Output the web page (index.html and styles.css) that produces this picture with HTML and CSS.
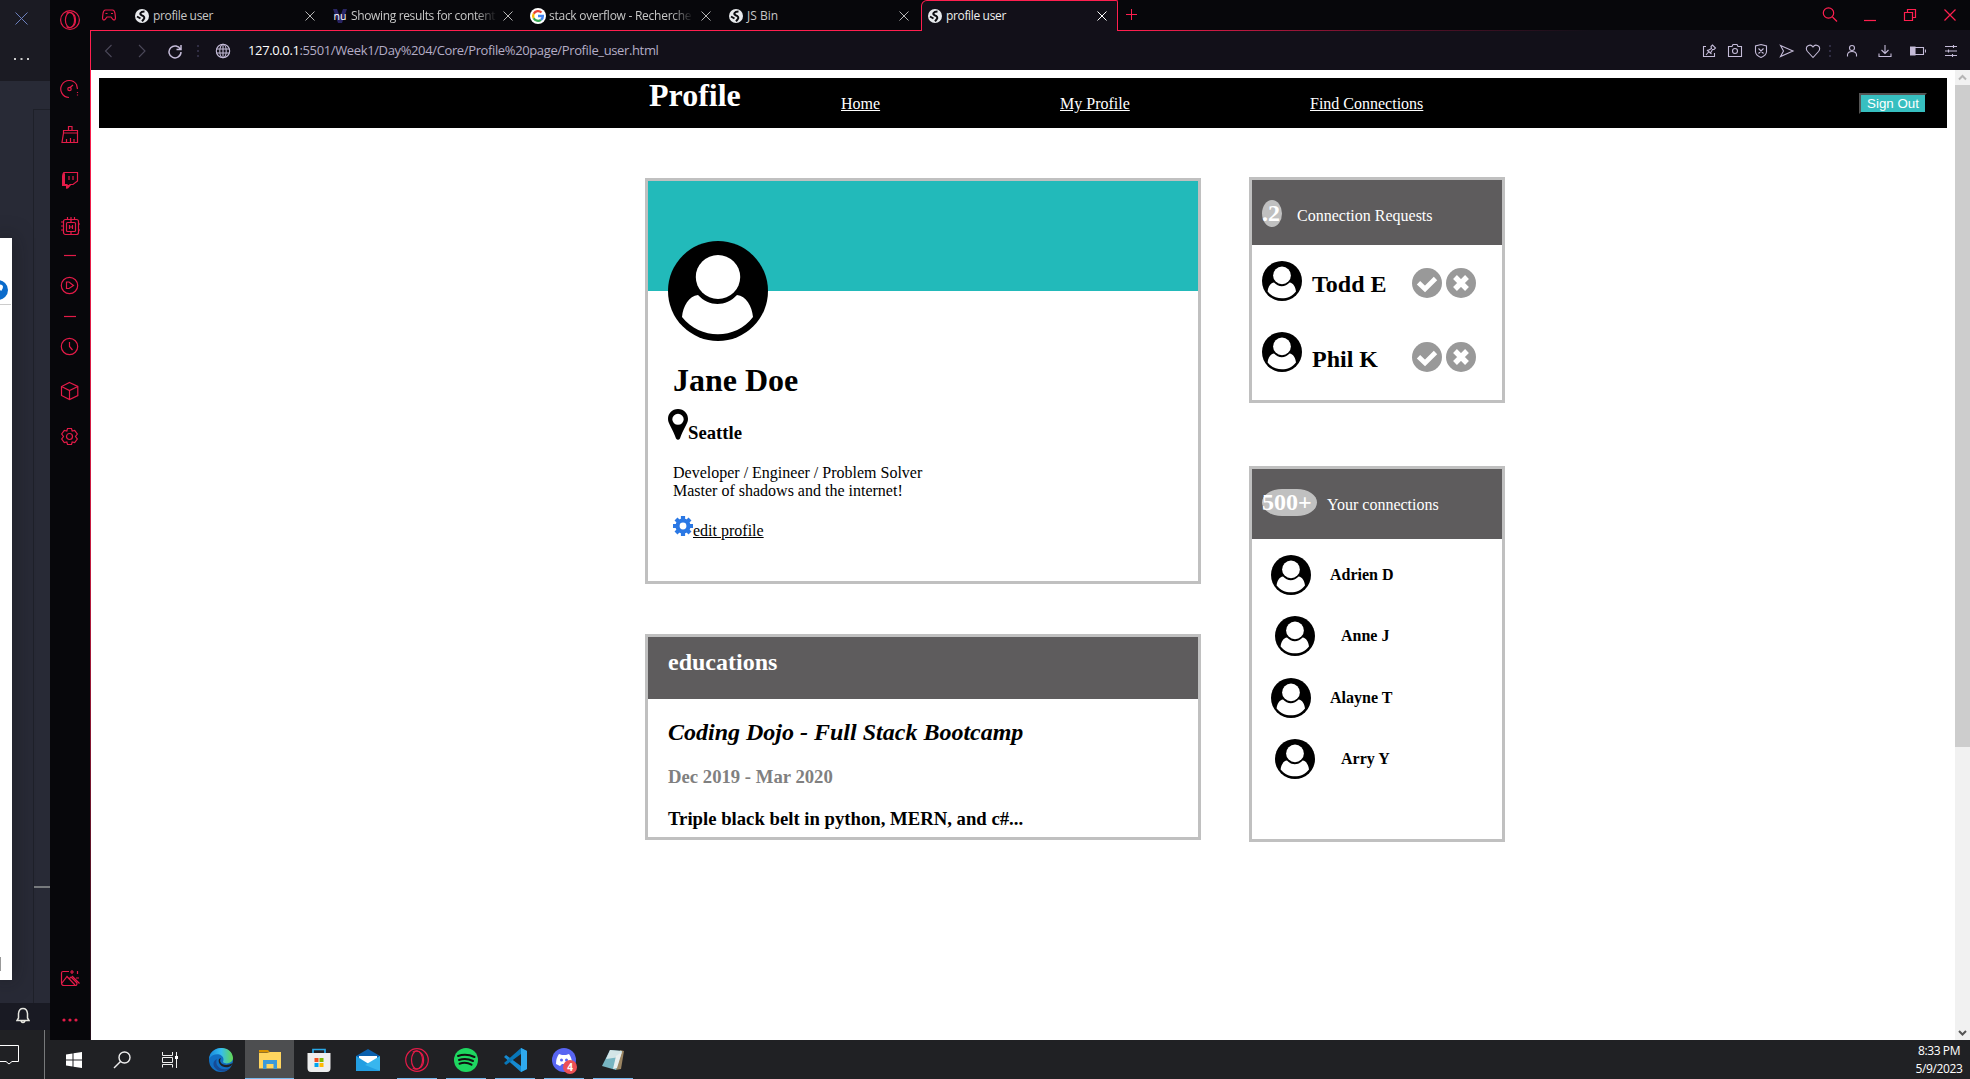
FILE: index.html
```html
<!DOCTYPE html>
<html lang="en">
<head>
<meta charset="utf-8">
<title>profile user</title>
<link rel="stylesheet" href="styles.css">
</head>
<body>
<svg class="defs" aria-hidden="true">
  <symbol id="user" viewBox="0 0 100 100"><circle cx="50" cy="50" r="50"/><ellipse cx="50" cy="36" rx="22.2" ry="22" fill="#fff"/><path d="M30 54C21 55 15 65 14 76C32 99 68 99 85 76C84 65 78 55 69 54C58 66 41 66 30 54Z" fill="#fff"/></symbol>
  <symbol id="check" viewBox="0 0 30 30"><circle cx="15" cy="15" r="15" fill="#999"/><path d="M6.500 14.800L13 21L23.500 10.500" fill="none" stroke="#fff" stroke-width="4.800"/></symbol>
  <symbol id="cross" viewBox="0 0 30 30"><circle cx="15" cy="15" r="15" fill="#999"/><path d="M9 9L21 21M21 9L9 21" fill="none" stroke="#fff" stroke-width="5.400"/></symbol>
  <symbol id="world" viewBox="0 0 14 14"><circle cx="7" cy="7" r="7" fill="#e8eaed"/><path d="M9.500 2.500C5 2.500 4.500 5 6.500 6.200C9.500 7 10 9 8.500 10.500L7 12.300M2 7.500L5.500 9.500" fill="none" stroke="#0b0b10" stroke-width="2"/></symbol>
  <symbol id="x" viewBox="0 0 10 10"><path d="M.5 .5L9.500 9.500M9.500 .5L.5 9.500"/></symbol>
  <symbol id="opera" viewBox="0 0 20 20"><circle cx="10" cy="10" r="9.400"/><ellipse cx="10" cy="10" rx="4.600" ry="7.500"/><path d="M6.500 3.500C9 1.200 15.500 2.500 15.500 10S9 18.800 6.500 16.500"/></symbol>
</svg>
<div class="desktop">
  <div class="behind">
    <div class="behind-title">
      <svg class="b-x" viewBox="0 0 13 13"><path d="M.5 .5L12.500 12.500M12.500 .5L.5 12.500"/></svg>
      <svg class="b-dots" viewBox="0 0 17 4"><path d="M1 2h2M7.500 2h2M14 2h2"/></svg>
    </div>
    <div class="behind-body">
      <div class="dialog">
        <svg viewBox="0 0 12 742"><circle cx="-2" cy="52" r="10" fill="#0b6bcb"/><path d="M0 48Q3 48 0 52" stroke="#fff" stroke-width="3"/><path d="M0 66.500H11" stroke="#ccc"/><path d="M.5 719v14" stroke="#999"/></svg>
      </div>
      <div class="pane"><div class="pane-line"></div></div>
    </div>
    <div class="behind-status">
      <svg viewBox="0 0 14 17"><path d="M1 13.500H13L11.500 11V6.500Q11 1.500 7 1.500T2.500 6.500V11ZM5 14Q7 17 9 14"/></svg>
    </div>
    <div class="bar-left">
      <svg viewBox="0 0 20 20"><path d="M0 .5H18.500V16.500H12L9 19L6 16.500H0"/></svg>
      <i></i>
    </div>
  </div>

  <div class="main">
    <div class="browser">
      <nav class="sidebar">
        <svg viewBox="0 0 20 20"><use href="#opera"/></svg>
        <svg class="m49" viewBox="0 0 20 20"><path d="M9 18.500A8.500 8.500 0 1 1 16.500 5.500L17.500 10M17.500 13v1M17.500 15.500v1M9.500 9L13 6"/><circle cx="9.500" cy="10" r="1.700"/></svg>
        <svg class="m26" viewBox="0 0 20 20"><path d="M3.500 8V5.500H17.500V8ZM3.500 8L2 17.500H17.500V8M8.500 5V1.500H12V5M6.500 17V14M10.500 17V13M14 17V14"/></svg>
        <svg class="m25" viewBox="0 0 20 20"><path d="M4 2.500H17.500V11L13 14.500H10L7 17.500V14.500H3V4Z"/><path class="fill" d="M4 2L2 6V16H6V18.500H8L11 15H5V4Z"/><path d="M9 6v4M13 6v4"/></svg>
        <svg class="m26" viewBox="0 0 20 20"><rect x="3.500" y="3.500" width="15" height="15" rx="2"/><rect x="6.500" y="6.500" width="9" height="9" rx="1"/><path d="M9.500 9v4M12.500 9v4M9.500 11h3M7.500 3V1M11 6V1M14.500 3V1M11 16v3M1 6h2M1 10h2M1 14h2M18 8h2M18 14h2"/></svg>
        <svg class="m9" viewBox="0 0 20 20"><path d="M4 10.500H16"/></svg>
        <svg class="m10" viewBox="0 0 20 20"><circle cx="9.500" cy="10.500" r="8.200"/><path d="M6.500 7H9L13.500 10.500L9 13.500H6.500Z"/></svg>
        <svg class="m11" viewBox="0 0 20 20"><path d="M4 10.500H16"/></svg>
        <svg class="m10" viewBox="0 0 20 20"><circle cx="9.500" cy="10.500" r="8.200"/><path d="M9.500 6V10.500L12.500 14"/></svg>
        <svg class="m25" viewBox="0 0 20 20"><path d="M9.500 1.500L17.800 5.500V14.500L9.500 18.500L1.500 14.500V5.500ZM1.500 5.500L9.500 9.500L17.800 5.500M9.500 9.500V18.500"/></svg>
        <svg class="m25" viewBox="0 0 20 20"><circle cx="9.500" cy="10.500" r="3"/><path d="M7.500 2.500H11.500L12.200 5L14.700 4.500L17.300 8L15.500 10.500L17.300 13L14.700 16.500L12.200 16L11.500 18.500H7.500L6.800 16L4.300 16.500L1.700 13L3.500 10.500L1.700 8L4.300 4.500L6.800 5Z"/></svg>
        <svg class="push" viewBox="0 0 20 20"><path d="M9 3.500H3Q1.500 3.500 1.500 5V15Q1.500 17.500 4 17.500H15.500Q17 17.500 17 15M2 15L7 8.500L15 17M9 11L11 9L17 15M12 8L19.500 15.500M12 2v4M10 4h4M17.500 3v3M16 10h3"/></svg>
        <svg class="m22 dots" viewBox="0 0 20 20"><circle cx="4" cy="10" r="1.600"/><circle cx="10" cy="10" r="1.600"/><circle cx="16" cy="10" r="1.600"/></svg>
      </nav>
      <div class="window">
        <div class="tabs">
          <svg class="gx" viewBox="0 0 14 12"><path d="M3.500 1H10.500Q12.500 1 13 4.500L13.500 9Q13 12 11 10.500L9 8H5L3 10.500Q1 12 .5 9L1 4.500Q1.500 1 3.500 1ZM3.500 4.500h2M9 4.500h2"/></svg>
          <div class="tab"><svg class="fav" viewBox="0 0 14 14"><use href="#world"/></svg><span class="t1">profile user</span><svg class="close" viewBox="0 0 10 10"><use href="#x"/></svg></div>
          <div class="tab"><span class="nu"><svg viewBox="0 0 14 14"><path d="M0 0h4l3 8l3-8h4L9 14H5Z" fill="#292564"/></svg><b>nu</b></span><span class="t2 fade">Showing results for content</span><svg class="close" viewBox="0 0 10 10"><use href="#x"/></svg></div>
          <div class="tab goog"><svg class="fav" viewBox="0 0 16 16"><circle cx="8" cy="8" r="8" fill="#fff"/><g fill="none" stroke-width="2.300"><path d="M11.500 4.500A4.900 4.900 0 0 0 3.700 5.700" stroke="#ea4335"/><path d="M3.700 5.700A4.900 4.900 0 0 0 3.700 10.300" stroke="#fbbc05"/><path d="M3.700 10.300A4.900 4.900 0 0 0 11 11.800" stroke="#34a853"/><path d="M11 11.800Q13 10.500 12.900 8H8" stroke="#4285f4"/></g></svg><span class="t3 fade">stack overflow - Recherche</span><svg class="close" viewBox="0 0 10 10"><use href="#x"/></svg></div>
          <div class="tab"><svg class="fav" viewBox="0 0 14 14"><use href="#world"/></svg><span class="t4">JS Bin</span><svg class="close" viewBox="0 0 10 10"><use href="#x"/></svg></div>
          <div class="tab active"><svg class="fav" viewBox="0 0 14 14"><use href="#world"/></svg><span class="t1">profile user</span><svg class="close" viewBox="0 0 10 10"><use href="#x"/></svg></div>
          <svg class="plus" viewBox="0 0 11 11"><path d="M5.500 0V11M0 5.500H11"/></svg>
          <div class="wincontrols">
            <svg viewBox="0 0 16 16"><circle cx="6.500" cy="6" r="5.200"/><path d="M10.500 10L15 14.500"/></svg>
            <svg viewBox="0 0 16 16"><path d="M2 13.500H14"/></svg>
            <svg viewBox="0 0 16 16"><path d="M2.500 5.500H10.500V13.500H2.500ZM5.500 5V2.500H13.500V10.500H11"/></svg>
            <svg viewBox="0 0 16 16"><path d="M2.500 2.500L13.500 13.500M13.500 2.500L2.500 13.500"/></svg>
          </div>
        </div>
        <div class="toolbar">
          <svg class="dim" viewBox="0 0 16 16"><path d="M10.500 2L4.500 8L10.500 14"/></svg>
          <svg class="dim fwd" viewBox="0 0 16 16"><path d="M5 2L11 8L5 14"/></svg>
          <svg class="reload" viewBox="0 0 16 16"><path d="M13.500 6.500A6 6 0 1 0 14 9M14 2V6.500H9.500"/></svg>
          <svg class="sep" viewBox="0 0 2 12"><path d="M0 1H2M0 6H2M0 11H2"/></svg>
          <svg class="globe" viewBox="0 0 16 16"><circle cx="8" cy="8" r="6.700"/><ellipse cx="8" cy="8" rx="3.200" ry="6.700"/><path d="M1.500 6H14.500M1.500 10H14.500M8 1.500V14.500"/></svg>
          <div class="url"><b>127.0.0.1</b>:5501/Week1/Day%204/Core/Profile%20page/Profile_user.html</div>
          <div class="tools">
            <svg viewBox="0 0 16 16"><path d="M5 3.500H2.500V13.500H13.500V10M5 12L8 8.500M6 7L10.500 11M7 7.500L10.500 5.500L10 3.500L11.500 2L14.500 5L13 6.500L11.500 6.500L9.500 10"/></svg>
            <svg viewBox="0 0 16 16"><path d="M1.500 3.500H5L6 1.500H10L11 3.500H14.500V13.500H1.500Z"/><circle cx="8" cy="8" r="2.500"/></svg>
            <svg viewBox="0 0 16 16"><path d="M8 1.500L13.500 3V9Q13 12.500 8 14.500Q3 12.500 2.500 9V3ZM5.500 5.500L10.500 10.500M10.500 5.500L5.500 10.500"/></svg>
            <svg viewBox="0 0 16 16"><path d="M1.500 2.500L14 8L1.500 13.500L4.500 8Z"/></svg>
            <svg viewBox="0 0 16 16"><path d="M8 14.500L2.500 8.500Q.5 6 2 3.500Q5.500 .500 8 4Q10.500 .5 14 3.500Q15.500 6 13.500 8.500Z"/></svg>
            <svg class="sep" viewBox="0 0 2 12"><path d="M0 1H2M0 6H2M0 11H2"/></svg>
            <svg viewBox="0 0 16 16"><circle cx="8" cy="5" r="2.500"/><path d="M3.500 13.500V11.500Q4 8.500 8 8.500T12.500 11.500V13.500"/></svg>
            <svg viewBox="0 0 16 16"><path d="M8 2V10.500M4.500 7L8 10.500L11.500 7M2 10.500V13.500H14V10.500"/></svg>
            <svg viewBox="0 0 16 16"><path d="M.5 4.500H13.500V11.500H.5ZM15.500 6.500V9.500"/><path class="fill" d="M0 4H5V12H0Z"/></svg>
            <svg viewBox="0 0 16 16"><path d="M2 3.500H14M2 8H14M2 12.500H14M10.500 2v3M5.500 6.500v3M9.500 11v3"/></svg>
          </div>
        </div>
        <div class="viewport">
          <div class="page">
            <header>
              <h1>Profile</h1>
              <a class="l1">Home</a><a class="l2">My Profile</a><a class="l3">Find Connections</a>
              <button>Sign Out</button>
            </header>
            <div class="columns">
              <main>
                <section class="card profile">
                  <div class="banner"></div>
                  <svg class="avatar" viewBox="0 0 100 100"><use href="#user"/></svg>
                  <h1>Jane Doe</h1>
                  <div class="place"><svg viewBox="0 0 20 31"><path d="M10 0C4 0 0 4.500 0 10C0 15 5 20 8 29.500Q10 32 12 29.500C15 20 20 15 20 10C20 4.500 16 0 10 0ZM10 4.800A5.700 5.500 0 1 1 10 15.800A5.700 5.500 0 1 1 10 4.800Z" fill-rule="evenodd"/></svg><h3>Seattle</h3></div>
                  <p>Developer / Engineer / Problem Solver<br>Master of shadows and the internet!</p>
                  <div class="edit"><svg viewBox="0 0 20 20"><circle cx="10" cy="10" r="5.500"/><path d="M10 0V5M10 15V20M0 10H5M15 10H20M3 3L6.500 6.500M13.500 13.500L17 17M17 3L13.500 6.500M6.500 13.500L3 17"/></svg><a>edit profile</a></div>
                </section>
                <section class="card education">
                  <div class="cardhead"><h2>educations</h2></div>
                  <h2 class="school">Coding Dojo - Full Stack Bootcamp</h2>
                  <h3 class="dates">Dec 2019 - Mar 2020</h3>
                  <h3>Triple black belt in python, MERN, and c#...</h3>
                </section>
              </main>
              <aside>
                <section class="card requests">
                  <div class="cardhead"><span class="count">.2</span><span class="label">Connection Requests</span></div>
                  <div class="request"><svg class="face" viewBox="0 0 100 100"><use href="#user"/></svg><h2>Todd E</h2><svg class="act" viewBox="0 0 30 30"><use href="#check"/></svg><svg class="act" viewBox="0 0 30 30"><use href="#cross"/></svg></div>
                  <div class="request second"><svg class="face" viewBox="0 0 100 100"><use href="#user"/></svg><h2>Phil K</h2><svg class="act" viewBox="0 0 30 30"><use href="#check"/></svg><svg class="act" viewBox="0 0 30 30"><use href="#cross"/></svg></div>
                </section>
                <section class="card connections">
                  <div class="cardhead"><span class="count">500+</span><span class="label">Your connections</span></div>
                  <div class="person"><svg class="face" viewBox="0 0 100 100"><use href="#user"/></svg><b>Adrien D</b></div>
                  <div class="person even"><svg class="face" viewBox="0 0 100 100"><use href="#user"/></svg><b>Anne J</b></div>
                  <div class="person third"><svg class="face" viewBox="0 0 100 100"><use href="#user"/></svg><b>Alayne T</b></div>
                  <div class="person even"><svg class="face" viewBox="0 0 100 100"><use href="#user"/></svg><b>Arry Y</b></div>
                </section>
              </aside>
            </div>
          </div>
          <div class="scrollbar">
            <svg viewBox="0 0 15 15"><path d="M4 9.500L7.500 6L11 9.500" stroke="#b5b5b5"/></svg>
            <div class="thumb"></div>
            <svg class="down" viewBox="0 0 15 15"><path d="M4 6L7.500 9.500L11 6" stroke="#555"/></svg>
          </div>
        </div>
      </div>
    </div>
    <div class="taskbar">
      <div class="sys"><svg viewBox="0 0 24 24"><path fill="#fff" d="M4 6.500L10.500 5.500V11.500H4ZM11.500 5.300L20 4V11.500H11.500ZM4 12.500H10.500V18.500L4 17.500ZM11.500 12.500H20V20L11.500 18.700Z"/></svg></div>
      <div class="sys"><svg viewBox="0 0 24 24"><g fill="none" stroke="#eee" stroke-width="1.400"><circle cx="14.500" cy="9.500" r="5.500"/><path d="M10.500 13.500L4 20"/></g></svg></div>
      <div class="sys"><svg viewBox="0 0 24 24"><path d="M4.500 4V7.500H14.500V4M4.500 19.500V16.500H14.500V19.500M4.500 9.500H14.500V14.500H4.500ZM18.500 4V20" fill="none" stroke="#eee"/><rect x="17" y="8" width="3" height="3" fill="#fff"/></svg></div>
      <div class="app"><svg viewBox="0 0 24 24"><defs><linearGradient id="edge" x1="0" x2="1"><stop stop-color="#1687d9"/><stop offset=".5" stop-color="#35bdf0"/><stop offset="1" stop-color="#65d94f"/></linearGradient></defs><circle cx="12" cy="12" r="12" fill="#116fc3"/><path d="M0 11C1-3 23-4 24 10C24 15 17 17 14 14C17 6 5 3 0 11Z" fill="url(#edge)"/><path d="M8 11C5 17 12 24 21 20C17 25 10 24 7 21C3 17 4 13 8 11Z" fill="#164b96"/><path d="M12 10C9 14 14 20 24 15L22 18C15 22 8 16 10 11Z" fill="#202124"/></svg></div>
      <div class="app current"><svg viewBox="0 0 24 24"><path d="M1 2H10L12 4.500H1Z" fill="#d99300"/><path d="M1 5H9L12 4H23V20.500H1Z" fill="#ffd55f"/><path d="M5 21V12H19V21H15.500V16H8.500V21Z" fill="#3b9ad9"/></svg></div>
      <div class="app"><svg viewBox="0 0 24 24"><path d="M6 6V1.500H18V6" fill="none" stroke="#29a9e8" stroke-width="1.700"/><path d="M.5 5H23.500V20Q23.500 24 20 24H4Q.5 24 .5 20Z" fill="#eee"/><path d="M7.500 10h4v4h-4Z" fill="#f25022"/><path d="M12.500 10h4v4h-4Z" fill="#7fba00"/><path d="M7.500 15h4v4h-4Z" fill="#00a4ef"/><path d="M12.500 15h4v4h-4Z" fill="#ffb900"/></svg></div>
      <div class="app"><svg viewBox="0 0 24 24"><path d="M0 8L12 1L24 8V15H0Z" fill="#0b60ad"/><path d="M3 8H21V15L12 17L3 13Z" fill="#fff"/><path d="M0 8L24 23H0Z" fill="#239fe2"/><path d="M24 8L9 17L24 23Z" fill="#38b6ee"/></svg></div>
      <div class="app open operaapp"><svg viewBox="0 0 20 20"><use href="#opera"/></svg></div>
      <div class="app open"><svg viewBox="0 0 24 24"><circle cx="12" cy="12" r="12" fill="#1ed760"/><path d="M4 8Q12 5 20.500 9M5 12Q12 9.500 19 13M5.500 15.700Q12 13.500 17.500 16.700" fill="none" stroke="#111" stroke-width="2" stroke-linecap="round"/></svg></div>
      <div class="app open"><svg viewBox="0 0 24 24"><path d="M18 0L24 3V21L18 24L1 9L3 7L18 18Z" fill="#168ad0"/><path d="M18 0V6L3 17L1 15Z" fill="#0877b9"/><path d="M18 0L24 3V21L18 24Z" fill="#2fa9ee"/></svg></div>
      <div class="app open discord"><svg viewBox="0 0 24 24"><circle cx="12" cy="12" r="12" fill="#5865f2"/><path d="M7 6L10 7H14L17 6Q20 10 20 16L16 18L14 16H10L8 18L4 16Q4 10 7 6Z" fill="#fff"/><circle cx="9.500" cy="12" r="1.500" fill="#5865f2"/><circle cx="14.500" cy="12" r="1.500" fill="#5865f2"/></svg><span>4</span></div>
      <div class="app open"><svg viewBox="0 0 24 24"><path d="M19 2L23 3L20 21L14 22Z" fill="#9b8562"/><path d="M9 2L21 3L15 22L1 18Z" fill="#77b5c2"/><path d="M9 2L21 3L19 9L5 11Z" fill="#d3e5e7"/><path d="M15 8L21 4L16 20L12 21Z" fill="#e8eeee"/></svg></div>
      <div class="clock">8:33 PM<br>5/9/2023</div>
    </div>
  </div>
</div>
</body>
</html>
```
FILE: styles.css
```css
* { box-sizing: border-box; }
body { margin: 0; background: #202124; font-family: "Liberation Serif", serif; font-size: 16px; line-height: 18px; }
svg { display: block; flex: none; }
h1, h2, h3, p { margin: 0; }
h1 { font-size: 32px; line-height: 36px; }
h2 { font-size: 24px; line-height: 28px; }
h3 { font-size: 18.72px; line-height: 22px; }
.defs { display: none; }
.desktop { display: flex; width: 1970px; height: 1079px; overflow: hidden; }

/* window partly hidden on the left */
.behind { width: 50px; display: flex; flex-direction: column; background: #282a36; }
.behind-title { height: 81px; background: #1b1b23; padding: 12px 0 0 13px; }
.behind-title svg { fill: none; }
.b-x { width: 17px; height: 13px; stroke: #6c80bd; }
.b-dots { width: 17px; height: 4px; margin-top: 32px; stroke: #ccc; stroke-width: 2; }
.behind-body { height: 922px; display: flex; justify-content: space-between; }
.dialog { width: 12px; height: 742px; margin-top: 157px; background: #fff; box-shadow: 0 0 20px #1118; }
.dialog svg { width: 12px; height: 742px; fill: none; }
.pane { width: 17px; margin-top: 28px; border: solid #1e2029; border-width: 1px 0 0 1px; padding-top: 776px; }
.pane-line { height: 2px; background: #777a7d; }
.behind-status { height: 27px; background: #191a23; padding: 4px 0 0 16px; }
.behind-status svg { width: 14px; height: 17px; fill: none; stroke: #e6e6e0; stroke-width: 1.5; }
.bar-left { height: 49px; display: flex; background: #202124; }
.bar-left svg { width: 20px; height: 20px; margin-top: 15px; fill: none; stroke: #fff; }
.bar-left i { width: 1px; margin-left: 24px; background: #77797a; }

.main { width: 1920px; display: flex; flex-direction: column; }
.browser { height: 1040px; display: flex; }
.sidebar { width: 40px; height: 1040px; padding: 10px 0; display: flex; flex-direction: column; align-items: center; background: #07070b; }
.sidebar svg { width: 20px; height: 20px; fill: none; stroke: #e31b48; stroke-width: 1.2; }
.sidebar .fill, .sidebar .dots { fill: #e31b48; stroke: none; }
.m9 { margin-top: 9px; } .m10 { margin-top: 10px; } .m11 { margin-top: 11px; } .m22 { margin-top: 22px; }
.m25 { margin-top: 25px; } .m26 { margin-top: 26px; } .m49 { margin-top: 49px; } .push { margin-top: auto; }

.window { width: 1880px; }
.tabs, .toolbar, .clock { font-family: "Open Sans", "Noto Sans", sans-serif; }
.tabs { height: 31px; display: flex; background: linear-gradient(90deg, #ff1f4f 1040px, #5e1029 1300px, #121019 1500px) bottom / 100% 1px no-repeat, #07070b; color: #c7c7c7; font-size: 12px; }
.gx { width: 14px; height: 12px; margin: 9px 13px 0 12px; fill: none; stroke: #e31b48; stroke-width: 1.2; }
.tab { width: 198px; height: 31px; padding: 0 12px 0 6px; display: flex; align-items: center; }
.tab > span { line-height: 16px; white-space: nowrap; margin-left: 4px; }
.fav { width: 14px; height: 14px; }
.goog { padding-left: 5px; }
.goog .fav { width: 16px; height: 16px; }
.goog > span { margin-left: 3px; }
.close { width: 10px; height: 10px; margin-left: auto; stroke: #b5b5b5; stroke-width: 1; }
.tab > .nu { display: grid; width: 14px; height: 16px; margin: 0; place-items: center; }
.nu > * { grid-area: 1 / 1; }
.nu svg { width: 14px; height: 14px; }
.nu b { font-size: 10.5px; line-height: 14px; color: #fff; font-weight: 400; }
.tab .t1 { letter-spacing: -.35px; }
.tab .t2 { width: 146px; letter-spacing: -.35px; }
.tab .t3 { width: 144px; letter-spacing: -.26px; }
.tab .t4 { letter-spacing: 0; }
.fade { -webkit-mask-image: linear-gradient(90deg, #000 85%, transparent); mask-image: linear-gradient(90deg, #000 85%, transparent); }
.active { width: 197px; padding: 0 10px 0 6px; border: 1px solid #ff1f4f; border-bottom: 0; border-radius: 6px 2px 0 0; background: #121019; color: #eee; }
.active .close { stroke: #fff; }
.plus { width: 11px; height: 11px; margin: 9px 0 0 8px; stroke: #ff1f4f; }
.wincontrols { display: flex; gap: 24px; margin: 7px 12px 0 auto; }
.wincontrols svg { width: 16px; height: 16px; fill: none; stroke: #ff1f4f; stroke-width: 1.2; }

.toolbar { height: 39px; padding: 0 11px 0 10px; display: flex; align-items: center; background: #121019; border-left: 1px solid #ff1f4f; color: #b4adc6; }
.toolbar svg { width: 16px; height: 16px; fill: none; stroke: #c4bbd8; stroke-width: 1.1; }
.toolbar .dim { stroke: #4b4859; }
.toolbar .fwd { margin-left: 17px; }
.toolbar .reload { margin-left: 17px; stroke-width: 1.5; }
.toolbar .sep { width: 2px; height: 12px; stroke: #302d43; stroke-width: 2; }
.reload + .sep { margin-left: 14px; }
.toolbar .globe { margin-left: 16px; }
.url { margin: -2px 0 0 17px; font-size: 13px; line-height: 18px; letter-spacing: -.37px; white-space: nowrap; }
.url b { color: #fff; font-weight: 400; }
.tools { margin-left: auto; display: flex; align-items: center; }
.tools svg { margin-right: 10px; }
.tools .sep { margin: 0 13px 0 -2px; }
.tools .sep ~ svg:not(.sep) { margin-right: 17px; }
.tools svg:last-child:not(.sep) { margin-right: 0 !important; }
.tools .fill { fill: #c4bbd8; }

.viewport { height: 970px; display: flex; background: #fff; }
.page { width: 1865px; padding: 8px 8px 0; border-left: 1px solid; border-image: linear-gradient(#ff1f4f, #c31b40 50%, #21101a) 1; }
header { width: 1848px; height: 50px; display: flex; background: #000; color: #fff; }
header h1 { width: 192px; margin: -1px 0 0 550px; }
header a { margin-top: 17px; text-decoration: underline; }
.l1 { width: 219px; } .l2 { width: 250px; }
button { width: 68px; height: 21px; margin: 15px 20px 0 auto; padding: 0; background: #37bfc0; color: #fff; border: 2px outset #555; border-color: #555 #000 #000 #555; font: 13.333px/16px "Liberation Sans", sans-serif; }

.columns { display: flex; margin: 49px 0 0 546px; gap: 48px; }
.card { border: 3px solid #c0c0c0; }
.cardhead { background: #5e5c5d; color: #fff; }
main { width: 556px; padding-top: 1px; }
.profile { height: 406px; }
.banner { height: 110px; background: #22baba; }
.avatar { width: 100px; height: 100px; margin: -50px 0 0 20px; }
.profile h1 { margin: 21px 0 0 25px; }
.place { display: flex; align-items: flex-end; margin: 11px 0 0 20px; height: 31px; }
.place svg { width: 20px; height: 31px; }
.place h3 { margin-bottom: -4px; }
.profile p { margin: 24px 0 0 25px; }
.edit { display: flex; margin: 16px 0 0 25px; }
.edit svg { width: 20px; height: 20px; fill: none; stroke: #2b78e4; stroke-width: 4.2; }
.edit a { margin-top: 6px; text-decoration: underline; }
.education { height: 206px; margin-top: 50px; }
.education .cardhead { height: 62px; padding: 11px 0 0 20px; }
.education > h2, .education > h3 { margin-left: 20px; }
.school { margin-top: 19px; font-style: italic; }
.dates { margin: 20px 0; color: #808080; }

aside { width: 256px; }
.cardhead { display: flex; }
.requests { height: 226px; }
.requests .cardhead { height: 65px; }
aside .cardhead { padding: 20px 0 0 10px; }
.count { height: 27px; width: 20px; background: #c0c0c0; border-radius: 50%; font: bold 24px/27px "Liberation Serif", serif; }
.label { margin: 7px 0 0 15px; }
.request { display: flex; height: 71px; padding: 16px 0 0 10px; }
.face { width: 40px; height: 40px; }
.request h2 { width: 100px; margin: 9px 0 0 10px; }
.act { width: 30px; height: 30px; margin: 7px 4px 0 0; }
.second h2 { margin-top: 13px; }
.second .act { margin-top: 10px; }
.connections { height: 376px; margin-top: 63px; }
.connections .cardhead { height: 70px; }
.connections .count { width: 55px; border-radius: 20px / 13.5px; }
.connections .label { margin-left: 10px; }
.person { display: flex; margin: 16px 0 0 19px; }
.person b { margin: 11px 0 0 19px; }
.person.even { margin: 21px 0 0 23px; }
.person.even b { margin-left: 26px; }
.person.third { margin-top: 22px; }

.scrollbar { width: 15px; height: 970px; display: flex; flex-direction: column; background: #f1f1f1; }
.scrollbar svg { width: 15px; height: 15px; fill: none; stroke-width: 2; }
.thumb { height: 662px; background: #cdcdcd; }
.down { margin-top: auto; }

.taskbar { height: 39px; display: flex; background: #202124; }
.sys, .app { width: 48px; height: 39px; display: flex; align-items: center; justify-content: center; }
.sys + .app { margin-left: 2px; }
.sys svg, .app svg { width: 24px; height: 24px; }
.app { width: 49px; }
.current { background: linear-gradient(#76b9ed, #76b9ed) bottom / 100% 1px no-repeat, #4d4e50; }
.open { background: linear-gradient(#76b9ed, #76b9ed) center bottom / 40px 1px no-repeat; }
.operaapp svg { fill: none; stroke: #e31b48; stroke-width: 1; }
.discord { position: relative; }
.discord span { position: absolute; right: 11px; bottom: 5px; width: 14px; height: 14px; border-radius: 50%; background: #ed4f55; color: #fff; font: bold 10px/14px "Open Sans", sans-serif; text-align: center; }
.clock { width: 62px; margin-left: auto; padding-top: 2px; color: #fff; font-size: 12px; line-height: 18px; letter-spacing: -.4px; text-align: center; }
```
